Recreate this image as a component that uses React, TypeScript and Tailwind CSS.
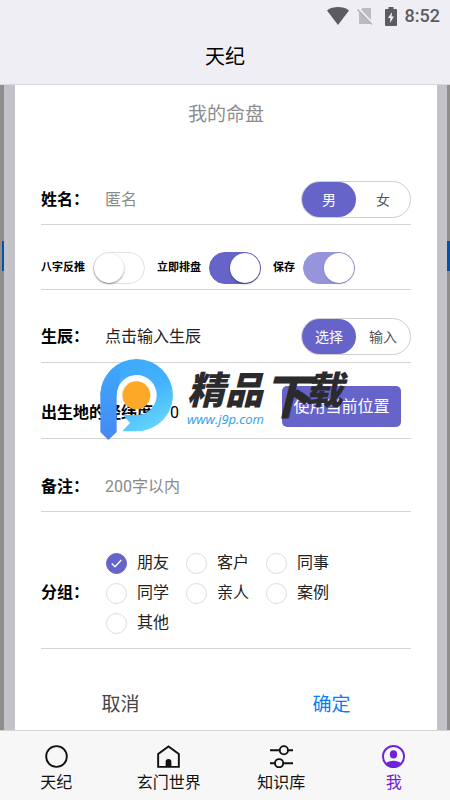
import React, { useState } from 'react';
import { clsx } from 'clsx';

const GROUPS = ['朋友', '客户', '同事', '同学', '亲人', '案例', '其他'];

function StatusBar() {
  return (
    <div className="flex h-7 items-center justify-end pt-1 pr-2.5 text-[#5c5c60]">
      <svg className="mr-2 h-[18px] w-[22px]" viewBox="0 0 22 18" fill="currentColor">
        <path d="M0 3.4C6-1 16-1 22 3.4L11 18Z" />
      </svg>
      <svg className="mr-3 h-[18px] w-4" viewBox="0 0 16 18" fill="none">
        <path d="M5.5 1H13a1 1 0 0 1 1 1v14a1 1 0 0 1-1 1H3a1 1 0 0 1-1-1V5Z" fill="#bcbbc1" />
        <path d="M1.5 1.5L16 17" stroke="#efeef4" strokeWidth="2.4" />
        <path d="M0.5 2.5L15 17.5" stroke="#aeadb3" strokeWidth="1.2" />
      </svg>
      <svg className="mr-2 h-[19px] w-3" viewBox="0 0 12 19">
        <path d="M3.5 0h5v2H11a1 1 0 0 1 1 1v15a1 1 0 0 1-1 1H1a1 1 0 0 1-1-1V3a1 1 0 0 1 1-1h2.5Z" fill="currentColor" />
        <path d="M7 5L3 11h2.3L5 16l4-6.4H6.6Z" fill="#efeef4" />
      </svg>
      <span className="text-lg leading-5 font-medium">8:52</span>
    </div>
  );
}

interface SegmentedProps {
  name: string;
  options: string[];
}

function Segmented({ name, options }: SegmentedProps) {
  const [value, setValue] = useState(options[0]);
  return (
    <div className="flex h-[37px] w-[110px] shrink-0 rounded-full border border-[#cfcfcf] bg-white">
      {options.map((o) => (
        <label
          key={o}
          className={clsx(
            'flex flex-1 items-center justify-center rounded-full text-sm',
            value === o ? 'bg-[#6664c8] text-white' : 'text-[#555]',
          )}
        >
          <input type="radio" name={name} value={o} checked={value === o} onChange={() => setValue(o)} className="sr-only" />
          {o}
        </label>
      ))}
    </div>
  );
}

interface ToggleProps {
  label: string;
  defaultOn?: boolean;
  faded?: boolean;
}

function Toggle({ label, defaultOn = false, faded = false }: ToggleProps) {
  const [on, setOn] = useState(defaultOn);
  return (
    <label className="flex items-center gap-2 text-[11px] font-bold">
      {label}
      <input type="checkbox" checked={on} onChange={(e) => setOn(e.target.checked)} className="sr-only" />
      <span
        className={clsx(
          'flex h-8 w-[52px] rounded-full border',
          !on && 'justify-start border-[#e2e2e2] bg-white',
          on && !faded && 'justify-end border-[#6664c8] bg-[#6664c8]',
          on && faded && 'justify-end border-[#9694da] bg-[#9694da]',
        )}
      >
        <span className={clsx('h-[30px] w-[30px] rounded-full bg-white', faded ? 'shadow-sm' : 'shadow-[0_1px_2px_rgba(0,0,0,0.45)]')} />
      </span>
    </label>
  );
}

function Logo() {
  return (
    <svg className="h-[95px] w-[90px] shrink-0" viewBox="0 0 270 285">
      <defs>
        <linearGradient id="ring" x1="0.1" y1="0" x2="0.6" y2="1">
          <stop offset="0" stopColor="#3fa6fb" />
          <stop offset="0.55" stopColor="#42b2fd" />
          <stop offset="1" stopColor="#63d3fe" />
        </linearGradient>
        <linearGradient id="stem" x1="0" y1="0" x2="0" y2="1">
          <stop offset="0" stopColor="#3fa6fb" />
          <stop offset="1" stopColor="#4689f5" />
        </linearGradient>
      </defs>
      <path d="M16 130A109 109 0 0 1 234 130A109 109 0 0 1 125 238H82L105 213L84 189H125A60 60 0 1 0 65 130L40 150Z" fill="url(#ring)" />
      <path d="M16 130C17 95 34 62 62 42C88 50 72 85 65 125V240L40 264L16 240Z" fill="url(#stem)" />
      <circle cx="124" cy="130" r="42" fill="#fca928" />
    </svg>
  );
}

function Watermark() {
  return (
    <div className="pointer-events-none absolute -top-[11px] left-[54px] flex">
      <Logo />
      <div className="flex flex-col">
        <div className="flex h-[57px] items-start pt-3 pl-0.5 font-['Noto_Sans_CJK_SC',sans-serif] font-black text-[#2b2b2d] italic">
          <span className="pt-0.5 text-[38px] leading-[44px]">精品</span>
          <span className="text-[48px] leading-[58px]">下</span>
          <span className="-ml-1.5 pt-0.5 text-[38px] leading-[44px]">载</span>
        </div>
        <span className="pl-0.5 font-['Open_Sans',sans-serif] text-[13px] leading-5 text-[#2ba0e8] italic">www.j9p.com</span>
      </div>
    </div>
  );
}

function GroupPicker() {
  const [group, setGroup] = useState(GROUPS[0]);
  return (
    <div role="radiogroup" aria-labelledby="group-label" className="flex items-center border-b border-[#d4d4d4] pt-9 pb-2.5">
      <span id="group-label" className="w-[65px] shrink-0 font-bold">分组：</span>
      <div className="grid grid-cols-[80px_80px_80px]">
        {GROUPS.map((g) => (
          <label key={g} className="flex h-[30px] items-center gap-2.5 text-base text-[#222]">
            <input type="radio" name="group" checked={group === g} onChange={() => setGroup(g)} className="sr-only" />
            <span
              className={clsx(
                'flex h-[21px] w-[21px] items-center justify-center rounded-full border',
                group === g ? 'border-[#6664c8] bg-[#6664c8]' : 'border-[#dcdcdc]',
              )}
            >
              {group === g && (
                <svg className="h-[9px] w-[11px]" viewBox="0 0 11 9" fill="none" stroke="#fff" strokeWidth="1.4">
                  <path d="M0.8 4.5L4 7.7L10.3 1" />
                </svg>
              )}
            </span>
            {g}
          </label>
        ))}
      </div>
    </div>
  );
}

function TabBar() {
  const tabs = [
    {
      name: '天纪',
      icon: <circle cx="12" cy="12" r="10.8" />,
    },
    {
      name: '玄门世界',
      icon: (
        <>
          <path d="M1.2 22.8V9.5L12 1.5L22.8 9.5V22.8Z" />
          <path d="M10 22V17.5A2 2 0 0 1 14 17.5V22Z" fill="currentColor" />
        </>
      ),
    },
    {
      name: '知识库',
      icon: (
        <>
          <path d="M0 5.5H10M19 5.5H24M0 19H5M14 19H24" />
          <circle cx="14.5" cy="5.5" r="4.3" />
          <circle cx="9.5" cy="19" r="4.3" />
        </>
      ),
    },
    {
      name: '我',
      icon: (
        <>
          <circle cx="12" cy="12" r="11" />
          <ellipse cx="12" cy="9.8" rx="3.8" ry="4.3" fill="currentColor" stroke="none" />
          <path d="M4 19.5C7 15.5 17 15.5 20 19.5C16 24 8 24 4 19.5Z" fill="currentColor" stroke="none" />
        </>
      ),
    },
  ];
  return (
    <nav className="flex grow border-t border-[#d3d3d5] bg-[#f7f7f7] pt-3.5 pb-[5px]">
      {tabs.map((t) => (
        <a key={t.name} href="#" className={clsx('flex flex-1 flex-col items-center gap-[3px]', t.name === '我' ? 'text-[#6f22d8]' : 'text-[#111]')}>
          <svg className="h-[23px] w-[23px]" viewBox="0 0 24 24" fill="none" stroke="currentColor" strokeWidth="2">
            {t.icon}
          </svg>
          <span className="text-base leading-6">{t.name}</span>
        </a>
      ))}
    </nav>
  );
}

export default function App() {
  return (
    <div className="flex min-h-screen flex-col bg-[#efeef4] font-['Roboto','Noto_Sans_CJK_SC',sans-serif] text-base leading-6 text-black">
      <header className="border-b border-[#d9d9dc] pb-[13px]">
        <StatusBar />
        <h1 className="pt-[15px] text-center text-xl leading-7">天纪</h1>
      </header>

      <main className="flex">
        <div className="w-1 shrink-0 bg-[#8f8e8c] pt-[156px] pl-0.5">
          <div className="h-[30px] bg-[#0552a4]" />
        </div>
        <div className="flex min-w-0 flex-1 bg-[#c3c2c9] pr-2.5 pl-[11px]">
          <form className="min-w-0 flex-1 bg-white px-[26px]" onSubmit={(e) => e.preventDefault()}>
            <h2 className="pt-4 text-center text-[19px] leading-7 text-[#8e8e92]">我的命盘</h2>

            <div className="flex items-center border-b border-[#d4d4d4] pt-[52px] pb-1.5">
              <label htmlFor="name" className="w-16 shrink-0 font-bold">姓名：</label>
              <input id="name" placeholder="匿名" className="min-w-0 flex-1 outline-none placeholder:text-[#8a8a8a]" />
              <Segmented name="gender" options={['男', '女']} />
            </div>

            <div className="flex items-center gap-3 border-b border-[#d4d4d4] pt-[27px] pb-[5px]">
              <Toggle label="八字反推" />
              <Toggle label="立即排盘" defaultOn />
              <Toggle label="保存" defaultOn faded />
            </div>

            <div className="flex items-center border-b border-[#d4d4d4] pt-7 pb-[7px]">
              <span className="w-16 shrink-0 font-bold">生辰：</span>
              <button type="button" className="flex-1 text-left text-[#222]">点击输入生辰</button>
              <Segmented name="birth" options={['选择', '输入']} />
            </div>

            <div className="relative flex items-center border-b border-[#d4d4d4] pt-[23px] pb-[11px]">
              <div className="flex flex-1 pt-3">
                <span className="shrink-0 font-bold">出生地的经纬度</span>
                <span className="pl-[17px]">0</span>
              </div>
              <button type="button" className="mr-2.5 h-[41px] w-[119px] shrink-0 rounded-[5px] bg-[#6664c8] text-white">
                使用当前位置
              </button>
              <Watermark />
            </div>

            <div className="flex items-center border-b border-[#d4d4d4] pt-9 pb-3">
              <label htmlFor="remark" className="w-16 shrink-0 font-bold">备注：</label>
              <input id="remark" placeholder="200字以内" className="min-w-0 flex-1 outline-none placeholder:text-[#8a8a8a]" />
            </div>

            <GroupPicker />

            <div className="flex pt-[41px] pb-2.5 text-[19px] leading-[30px]">
              <button type="button" className="flex-1 pr-[26px] text-[#444]">取消</button>
              <button type="submit" className="flex-1 pl-[26px] text-[#0a7cf8]">确定</button>
            </div>
          </form>
        </div>
        <div className="w-[3px] shrink-0 bg-[#8f8e8c] pt-[156px]">
          <div className="h-[30px] bg-[#0552a4]" />
        </div>
      </main>

      <TabBar />
    </div>
  );
}
